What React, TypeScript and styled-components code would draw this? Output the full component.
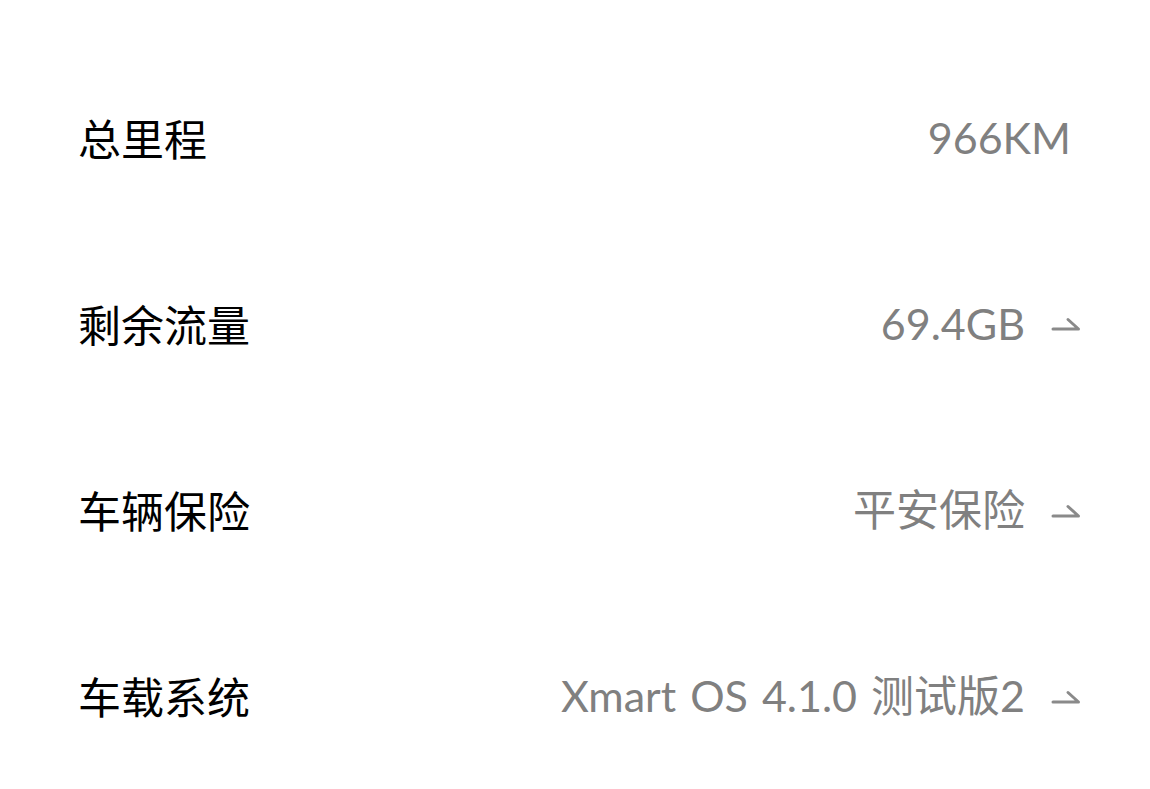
import styled, { createGlobalStyle } from 'styled-components';

const GlobalStyle = createGlobalStyle`
    html, body {
        margin: 0;
        padding: 0;
        background: #ffffff;
    }
    body {
        font-family: "Noto Sans CJK SC", "Noto Sans", sans-serif;
    }
`

interface Item {
    label: string
    value: string
    link?: boolean
}

const items: Item[] = [
    { label: '总里程', value: '966KM' },
    { label: '剩余流量', value: '69.4GB', link: true },
    { label: '车辆保险', value: '平安保险', link: true },
    { label: '车载系统', value: 'Xmart OS 4.1.0 测试版2', link: true },
]

const Arrow = () => (
    <ArrowSvg width="30" height="16" viewBox="0 0 30 16">
        <path d="M3 13 H28.5 L18 3.5" fill="none" stroke="#8a8a8a" strokeWidth="3" strokeLinecap="round" strokeLinejoin="round" />
    </ArrowSvg>
)

const App = () => {
    return (
        <Page>
            <GlobalStyle />
            {items.map((item) => (
                <Row key={item.label}>
                    <Label>{item.label}</Label>
                    <Right>
                        <Value $plain={!item.link}>{item.value}</Value>
                        {item.link && <Arrow />}
                    </Right>
                </Row>
            ))}
        </Page>
    );
};

export default App;

const Page = styled.div`
    width: 1150px;
    height: 789px;
    box-sizing: border-box;
    padding: 44px 70px 0 78px;
    display: flex;
    flex-direction: column;
`
const Row = styled.div`
    height: 186.25px;
    display: flex;
    align-items: center;
    justify-content: space-between;
`
const Label = styled.div`
    font-size: 43px;
    font-weight: 400;
    color: #000000;
    line-height: 1;
`
const Right = styled.div`
    display: flex;
    align-items: center;
    gap: 25px;
`
const Value = styled.div<{ $plain: boolean }>`
    font-family: "Lato", "Noto Sans CJK SC", sans-serif;
    font-size: 43px;
    color: #808080;
    line-height: 1;
    word-spacing: 3px;
    margin-right: ${(p) => (p.$plain ? '9px' : '0')};
`
const ArrowSvg = styled.svg`
    display: block;
    margin-top: 2px;
`
